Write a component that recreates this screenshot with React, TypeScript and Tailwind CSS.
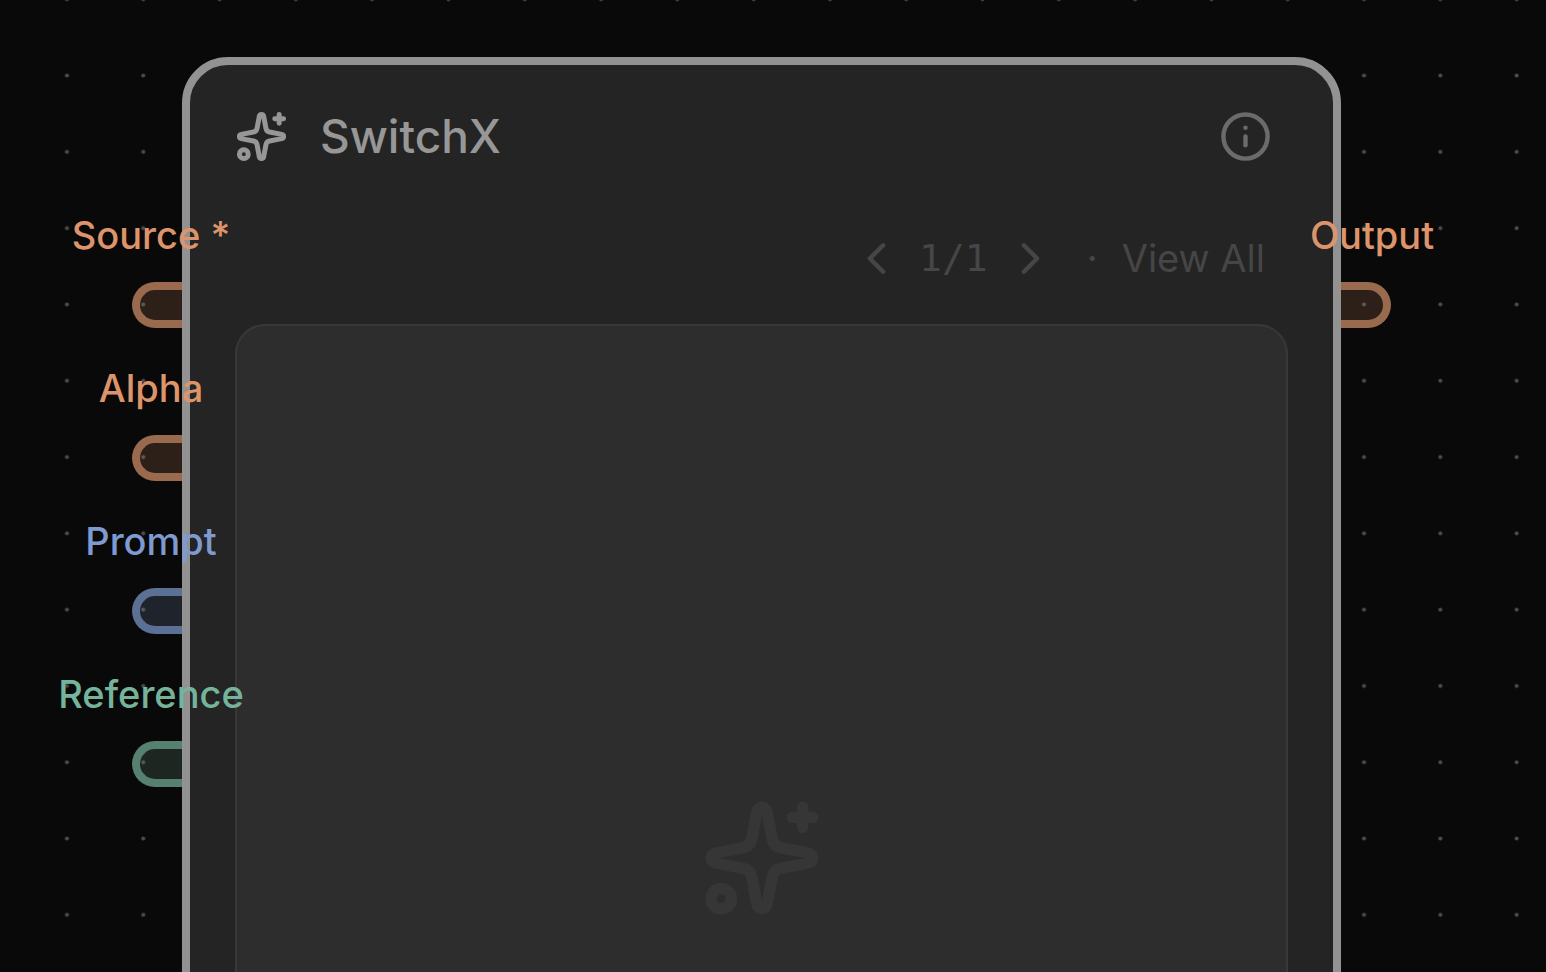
import { ChevronLeft, ChevronRight, Info, Sparkles } from 'lucide-react';
import clsx from 'clsx';

type PortKind = 'video' | 'text' | 'image';

interface Port {
  name: string;
  kind: PortKind;
}

const inputs: Port[] = [
  { name: 'Source *', kind: 'video' },
  { name: 'Alpha', kind: 'video' },
  { name: 'Prompt', kind: 'text' },
  { name: 'Reference', kind: 'image' },
];

const outputs: Port[] = [{ name: 'Output', kind: 'video' }];

const labelColors: Record<PortKind, string> = {
  video: 'text-[#dd946a]',
  text: 'text-[#7f9ad0]',
  image: 'text-[#75b49a]',
};

const handleColors: Record<PortKind, string> = {
  video: 'border-[#9a6a4f] bg-[#e09468]/17',
  text: 'border-[#5c6f94] bg-[#8fa9d3]/17',
  image: 'border-[#56806f] bg-[#85b79b]/17',
};

const DotGrid = () => (
  <svg className="absolute inset-0 h-full w-full" aria-hidden="true">
    <defs>
      <pattern id="dots" x="28.8" y="37.4" width="76.3" height="76.3" patternUnits="userSpaceOnUse">
        <circle cx="38.15" cy="38.15" r="2" fill="#4c4c4c" />
      </pattern>
    </defs>
    <rect width="100%" height="100%" fill="url(#dots)" />
  </svg>
);

const PortHandle = ({ port, side }: { port: Port; side: 'left' | 'right' }) => (
  <li className={clsx('flex flex-col gap-6', side === 'left' ? 'items-end' : 'items-start')}>
    <div className="relative z-10 flex w-[62px] justify-center">
      <span
        className={clsx(
          'whitespace-nowrap text-[38px] leading-[46px] font-medium',
          labelColors[port.kind],
        )}
      >
        {port.name}
      </span>
    </div>
    <div
      className={clsx(
        'h-[46px] w-[50px] border-8',
        side === 'left' ? 'rounded-l-full border-r-0' : 'rounded-r-full border-l-0',
        handleColors[port.kind],
      )}
    />
  </li>
);

const PortRail = ({ ports, side }: { ports: Port[]; side: 'left' | 'right' }) => (
  <ul
    className={clsx(
      'relative z-10 flex shrink-0 flex-col gap-[37px] pt-[155px]',
      side === 'left' ? 'w-[182px]' : 'w-[205px]',
    )}
  >
    {ports.map((port) => (
      <PortHandle key={port.name} port={port} side={side} />
    ))}
  </ul>
);

const NodeCard = () => (
  <section className="relative min-w-0 flex-1 rounded-[46px] border-8 border-[#929292] bg-[#242424] px-[45px] pt-[44px] pb-[45px]">
    <header className="flex items-center justify-between pr-4">
      <div className="flex items-center gap-8">
        <Sparkles className="size-[53px] text-[#979797]" strokeWidth={2.25} />
        <h1 className="text-[46px] leading-[54px] font-medium text-[#979797]">SwitchX</h1>
      </div>
      <button type="button" aria-label="Node info" className="text-[#6b6b6b]">
        <Info className="size-[53px]" />
      </button>
    </header>

    <div className="mt-[68px] flex items-center justify-end pr-[23px] text-[38px] leading-[54px] text-[#464646]">
      <button type="button" aria-label="Previous result">
        <ChevronLeft className="size-[53px]" />
      </button>
      <span className="px-4 font-['DejaVu_Sans_Mono',monospace]">1/1</span>
      <button type="button" aria-label="Next result">
        <ChevronRight className="size-[53px]" />
      </button>
      <span className="pr-6 pl-[30px]">·</span>
      <button type="button">View All</button>
    </div>

    <div className="mt-[39px] flex h-[1068px] items-center justify-center rounded-[30px] border-2 border-[#383838] bg-[#2d2d2d]">
      <Sparkles className="size-[122px] text-[#363636]" strokeWidth={2.25} />
    </div>
  </section>
);

const App = () => {
  return (
    <main className="relative h-screen overflow-hidden bg-[#090909] font-[Inter,sans-serif]">
      <DotGrid />
      <div className="flex items-start pt-[57px]">
        <PortRail ports={inputs} side="left" />
        <NodeCard />
        <PortRail ports={outputs} side="right" />
      </div>
    </main>
  );
};

export default App;
